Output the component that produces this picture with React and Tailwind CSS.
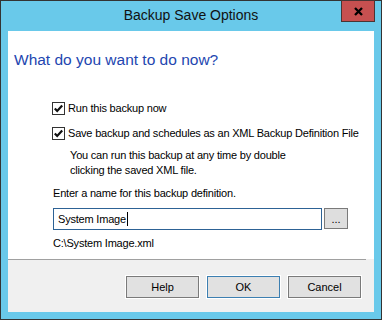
function Check() {
  return (
    <svg width="13" height="13" viewBox="0 0 13 13" className="shrink-0">
      <rect x="0.5" y="0.5" width="12" height="12" fill="#fff" stroke="#333" />
      <path d="M2.8 6.4 L5.2 8.9 L10.2 3.4" fill="none" stroke="#111" strokeWidth="2.2" />
    </svg>
  );
}

function DlgButton({ children, primary }) {
  return (
    <div
      className={
        "flex h-[22px] w-[73px] items-center justify-center bg-[#e1e1e1] text-[11px] text-black shadow-[0_0_0_1px_#fff] " +
        (primary
          ? "border-[1.5px] border-[#3c7fb1]"
          : "border-[1.5px] border-[#7a7a7a]")
      }
    >
      {children}
    </div>
  );
}

export default function App() {
  return (
    <div className="h-[320px] w-[382px] bg-[#333] p-px font-['Liberation_Sans',Arial,sans-serif]">
      <div className="relative flex h-full flex-col bg-[#69c9ea] px-[7px] pb-[7px]">
        {/* title bar */}
        <div className="flex h-[30px] items-center justify-center pb-px text-[14px] text-[#111]">
          Backup Save Options
        </div>
        <div className="absolute right-[6px] top-[-1px] flex h-[22px] w-[34px] items-center justify-center border border-[#4a3434] bg-[#c75050]">
          <svg width="9" height="9" viewBox="0 0 9 9">
            <path d="M1 1 L8 8 M8 1 L1 8" stroke="#000" strokeWidth="2.3" />
          </svg>
        </div>

        {/* body */}
        <div className="flex h-[228px] flex-col bg-white pl-[6px] text-[11px] tracking-[-0.2px] text-black">
          <div className="mt-[20px] text-[15.5px] leading-[18px] tracking-normal text-[#2346b0]">
            What do you want to do now?
          </div>

          <div className="ml-[38px] flex flex-col">
            <div className="mt-[31px] flex h-[16px] items-center gap-[3px]">
              <Check />
              <span>Run this backup now</span>
            </div>
            <div className="mt-[9px] flex h-[16px] items-center gap-[3px]">
              <Check />
              <span>Save backup and schedules as an XML Backup Definition File</span>
            </div>
            <div className="mt-[7px] pl-[18px] leading-[15px]">
              <div>You can run this backup at any time by double</div>
              <div>clicking the saved XML file.</div>
            </div>

            <div className="ml-px mt-[7px] leading-[16px]">
              Enter a name for this backup definition.
            </div>
            <div className="ml-px mt-[7px] flex items-start gap-[2px]">
              <div className="flex h-[22px] w-[269px] items-center border border-[#2d6295] pl-[4px]">
                <span>System Image</span>
                <span className="ml-px h-[14px] w-px bg-black" />
              </div>
              <div className="flex h-[21px] w-[24px] items-center justify-center border-[1.5px] border-[#7a7a7a] bg-[#dedede] pt-[2px] tracking-normal">
                ...
              </div>
            </div>
            <div className="ml-px mt-[5px] leading-[16px]">C:\System Image.xml</div>
          </div>
        </div>

        {/* separator */}
        <div className="flex h-px bg-[#f0f0f0]">
          <div className="h-px w-[358px] bg-[#a0a0a0]" />
        </div>

        {/* footer */}
        <div className="flex h-[52px] items-start justify-end gap-[8px] bg-[#f0f0f0] pr-[13px] pt-[16px]">
          <DlgButton>Help</DlgButton>
          <DlgButton primary>OK</DlgButton>
          <DlgButton>Cancel</DlgButton>
        </div>
      </div>
    </div>
  );
}
